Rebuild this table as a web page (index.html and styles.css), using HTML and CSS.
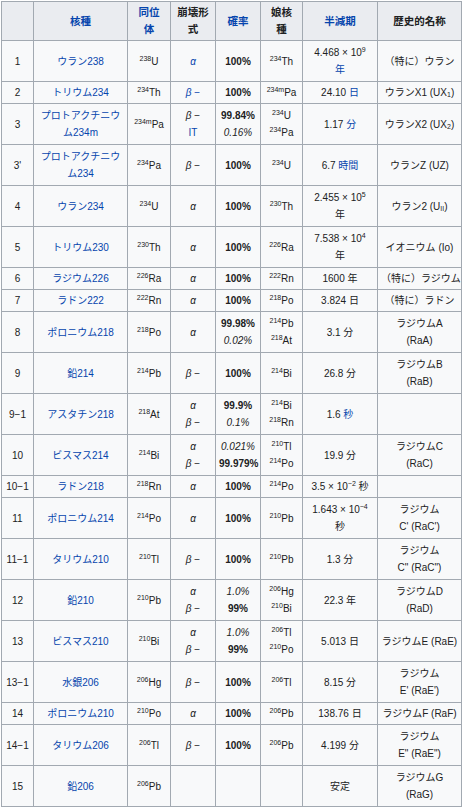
FILE: index.html
```html
<!DOCTYPE html>
<html lang="ja">
<head>
<meta charset="utf-8">
<title>ウラン系列</title>
<link rel="stylesheet" href="styles.css">
</head>
<body>
<table class="wikitable">
<colgroup>
<col class="c1"><col class="c2"><col class="c3"><col class="c4"><col class="c5"><col class="c6"><col class="c7"><col class="c8">
</colgroup>
<thead>
<tr>
<th></th>
<th><a>核種</a></th>
<th><a>同位<br>体</a></th>
<th>崩壊形<br>式</th>
<th><a>確率</a></th>
<th>娘核<br>種</th>
<th><a>半減期</a></th>
<th>歴史的名称</th>
</tr>
</thead>
<tbody>
<tr class="two">
<td>1</td><td><a>ウラン238</a></td><td><sup>238</sup>U</td><td><a><i>α</i></a></td><td><b>100%</b></td><td><sup>234</sup>Th</td><td>4.468 × 10<sup>9</sup><br><a>年</a></td><td>（特に）ウラン</td>
</tr>
<tr>
<td>2</td><td><a>トリウム234</a></td><td><sup>234</sup>Th</td><td><a><i>β</i> −</a></td><td><b>100%</b></td><td><sup>234m</sup>Pa</td><td>24.10 <a>日</a></td><td>ウランX1 (UX<sub>1</sub>)</td>
</tr>
<tr class="two">
<td>3</td><td><a>プロトアクチニウ<br>ム234m</a></td><td><sup>234m</sup>Pa</td><td><i>β</i> −<br><a>IT</a></td><td><b>99.84%</b><br><i>0.16%</i></td><td><sup>234</sup>U<br><sup>234</sup>Pa</td><td>1.17 <a>分</a></td><td>ウランX2 (UX<sub>2</sub>)</td>
</tr>
<tr class="two">
<td>3'</td><td><a>プロトアクチニウ<br>ム234</a></td><td><sup>234</sup>Pa</td><td><i>β</i> −</td><td><b>100%</b></td><td><sup>234</sup>U</td><td>6.7 <a>時間</a></td><td>ウランZ (UZ)</td>
</tr>
<tr class="two">
<td>4</td><td><a>ウラン234</a></td><td><sup>234</sup>U</td><td><i>α</i></td><td><b>100%</b></td><td><sup>230</sup>Th</td><td>2.455 × 10<sup>5</sup><br>年</td><td>ウラン2 (U<sub>II</sub>)</td>
</tr>
<tr class="two">
<td>5</td><td><a>トリウム230</a></td><td><sup>230</sup>Th</td><td><i>α</i></td><td><b>100%</b></td><td><sup>226</sup>Ra</td><td>7.538 × 10<sup>4</sup><br>年</td><td>イオニウム (Io)</td>
</tr>
<tr>
<td>6</td><td><a>ラジウム226</a></td><td><sup>226</sup>Ra</td><td><i>α</i></td><td><b>100%</b></td><td><sup>222</sup>Rn</td><td>1600 年</td><td>（特に）ラジウム</td>
</tr>
<tr>
<td>7</td><td><a>ラドン222</a></td><td><sup>222</sup>Rn</td><td><i>α</i></td><td><b>100%</b></td><td><sup>218</sup>Po</td><td>3.824 日</td><td>（特に）ラドン</td>
</tr>
<tr class="two">
<td>8</td><td><a>ポロニウム218</a></td><td><sup>218</sup>Po</td><td><i>α</i></td><td><b>99.98%</b><br><i>0.02%</i></td><td><sup>214</sup>Pb<br><sup>218</sup>At</td><td>3.1 分</td><td>ラジウムA<br>(RaA)</td>
</tr>
<tr class="two">
<td>9</td><td><a>鉛214</a></td><td><sup>214</sup>Pb</td><td><i>β</i> −</td><td><b>100%</b></td><td><sup>214</sup>Bi</td><td>26.8 分</td><td>ラジウムB<br>(RaB)</td>
</tr>
<tr class="two">
<td>9−1</td><td><a>アスタチン218</a></td><td><sup>218</sup>At</td><td><i>α</i><br><i>β</i> −</td><td><b>99.9%</b><br><i>0.1%</i></td><td><sup>214</sup>Bi<br><sup>218</sup>Rn</td><td>1.6 <a>秒</a></td><td></td>
</tr>
<tr class="two">
<td>10</td><td><a>ビスマス214</a></td><td><sup>214</sup>Bi</td><td><i>α</i><br><i>β</i> −</td><td><i>0.021%</i><br><b>99.979%</b></td><td><sup>210</sup>Tl<br><sup>214</sup>Po</td><td>19.9 分</td><td>ラジウムC<br>(RaC)</td>
</tr>
<tr>
<td>10−1</td><td><a>ラドン218</a></td><td><sup>218</sup>Rn</td><td><i>α</i></td><td><b>100%</b></td><td><sup>214</sup>Po</td><td>3.5 × 10<sup>−2</sup> 秒</td><td></td>
</tr>
<tr class="two">
<td>11</td><td><a>ポロニウム214</a></td><td><sup>214</sup>Po</td><td><i>α</i></td><td><b>100%</b></td><td><sup>210</sup>Pb</td><td>1.643 × 10<sup>−4</sup><br>秒</td><td>ラジウム<br>C' (RaC')</td>
</tr>
<tr class="two">
<td>11−1</td><td><a>タリウム210</a></td><td><sup>210</sup>Tl</td><td><i>β</i> −</td><td><b>100%</b></td><td><sup>210</sup>Pb</td><td>1.3 分</td><td>ラジウム<br>C" (RaC")</td>
</tr>
<tr class="two">
<td>12</td><td><a>鉛210</a></td><td><sup>210</sup>Pb</td><td><i>α</i><br><i>β</i> −</td><td><i>1.0%</i><br><b>99%</b></td><td><sup>206</sup>Hg<br><sup>210</sup>Bi</td><td>22.3 年</td><td>ラジウムD<br>(RaD)</td>
</tr>
<tr class="two">
<td>13</td><td><a>ビスマス210</a></td><td><sup>210</sup>Bi</td><td><i>α</i><br><i>β</i> −</td><td><i>1.0%</i><br><b>99%</b></td><td><sup>206</sup>Tl<br><sup>210</sup>Po</td><td>5.013 日</td><td>ラジウムE (RaE)</td>
</tr>
<tr class="two">
<td>13−1</td><td><a>水銀206</a></td><td><sup>206</sup>Hg</td><td><i>β</i> −</td><td><b>100%</b></td><td><sup>206</sup>Tl</td><td>8.15 分</td><td>ラジウム<br>E' (RaE')</td>
</tr>
<tr>
<td>14</td><td><a>ポロニウム210</a></td><td><sup>210</sup>Po</td><td><i>α</i></td><td><b>100%</b></td><td><sup>206</sup>Pb</td><td>138.76 日</td><td>ラジウムF (RaF)</td>
</tr>
<tr class="two">
<td>14−1</td><td><a>タリウム206</a></td><td><sup>206</sup>Tl</td><td><i>β</i> −</td><td><b>100%</b></td><td><sup>206</sup>Pb</td><td>4.199 分</td><td>ラジウム<br>E" (RaE")</td>
</tr>
<tr class="two">
<td>15</td><td><a>鉛206</a></td><td><sup>206</sup>Pb</td><td></td><td></td><td></td><td>安定</td><td>ラジウムG<br>(RaG)</td>
</tr>
</tbody>
</table>
</body>
</html>
```

FILE: styles.css
```css
html, body {
  margin: 0;
  padding: 0;
  background: #ffffff;
}

body {
  padding: 1px 0 0 1px;
  font-family: "Liberation Sans", "Noto Sans CJK JP", sans-serif;
  font-size: 10px;
  color: #202122;
}

.wikitable {
  border-collapse: collapse;
  table-layout: fixed;
  width: 460px;
  background: #f8f9fa;
  border: 1px solid #a2a9b1;
  color: #202122;
}

.c1 { width: 32px; }
.c2 { width: 94px; }
.c3 { width: 43px; }
.c4 { width: 45px; }
.c5 { width: 45px; }
.c6 { width: 42px; }
.c7 { width: 75px; }
.c8 { width: 84px; }

.wikitable th,
.wikitable td {
  border: 1px solid #a2a9b1;
  padding: 2px 3px;
  line-height: 17px;
  text-align: center;
  vertical-align: middle;
  white-space: nowrap;
}

.wikitable th {
  background: #eaecf0;
  font-weight: bold;
  font-size: 10.5px;
}

.wikitable tr.two td {
  padding-top: 3px;
  padding-bottom: 3px;
}

.wikitable a {
  color: #0645ad;
  text-decoration: none;
}

.wikitable sup,
.wikitable sub {
  font-size: 7px;
  line-height: 0;
}

.wikitable sup {
  vertical-align: 4px;
}

.wikitable sub {
  vertical-align: -1px;
}

.wikitable b {
  font-weight: bold;
}

.wikitable i {
  font-style: italic;
}
```
